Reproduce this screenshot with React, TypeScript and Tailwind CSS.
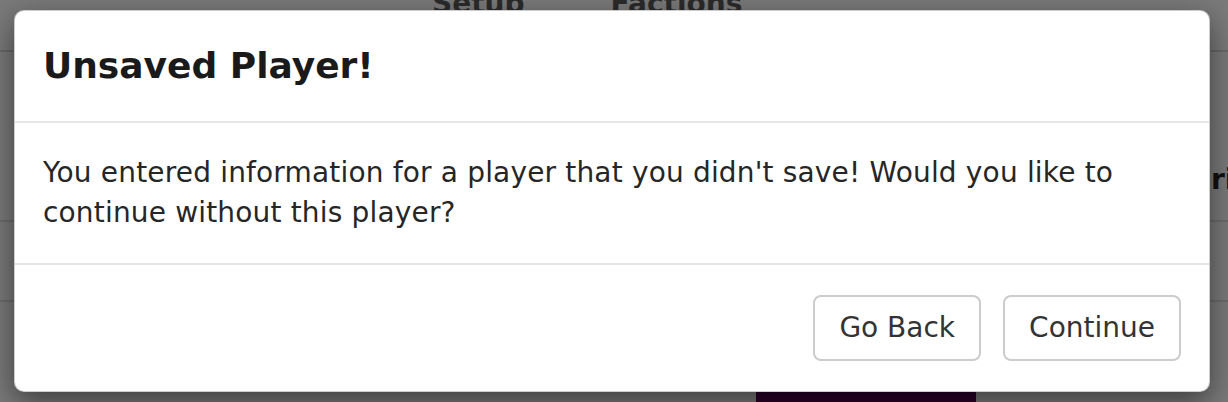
import React from "react";

const font = { fontFamily: "Verdana, 'DejaVu Sans', sans-serif" };

function PageBehind() {
  return (
    <div className="flex h-full w-full flex-col bg-[#7a7a7a]" style={font}>
      <div className="-mt-[12px] flex h-[64px] items-start border-b-2 border-[#686868] pl-[432px]">
        <span className="text-[28px] font-bold leading-[32px] text-[#2b2b2b]">Setup</span>
        <span className="ml-[86px] text-[28px] font-bold leading-[32px] text-[#2b2b2b]">Factions</span>
      </div>
      <div className="h-[170px] border-b-2 border-[#6c6c6c] pl-[1211px] pt-[112px]">
        <span className="whitespace-nowrap text-[28px] font-bold leading-[32px] text-[#111]">rio</span>
      </div>
      <div className="h-[80px] border-b-2 border-[#6c6c6c]" />
      <div className="flex flex-1 pl-[756px] pt-[90px]">
        <div className="h-full w-[220px] bg-[#2a0029]" />
      </div>
    </div>
  );
}

export default function App() {
  return (
    <div className="relative h-[402px] w-[1228px] overflow-hidden">
      <PageBehind />
      <div
        className="absolute left-[14px] top-[10px] w-[1196px] rounded-[10px] border border-black/20 bg-white shadow-[0_10px_30px_rgba(0,0,0,0.5)]"
        style={font}
      >
        <div className="border-b-2 border-[#e5e5e5] py-[30px] pl-[28px] pr-[30px]">
          <h4 className="text-[36px] font-bold leading-[50px] text-[#1a1a1a]">Unsaved Player!</h4>
        </div>
        <div className="py-[30px] pl-[28px] pr-[30px] text-[28px] leading-[40px] tracking-[0.17px] text-[#262626]">
          You entered information for a player that you didn't save! Would you like to
          continue without this player?
        </div>
        <div className="flex justify-end gap-[22px] border-t-2 border-[#e5e5e5] py-[30px] pl-[30px] pr-[28px]">
          <button className="h-[66px] rounded-[8px] border-2 border-[#ccc] bg-white px-[24px] text-[28px] text-[#333]">
            Go Back
          </button>
          <button className="h-[66px] rounded-[8px] border-2 border-[#ccc] bg-white px-[24px] text-[28px] text-[#333]">
            Continue
          </button>
        </div>
      </div>
    </div>
  );
}
